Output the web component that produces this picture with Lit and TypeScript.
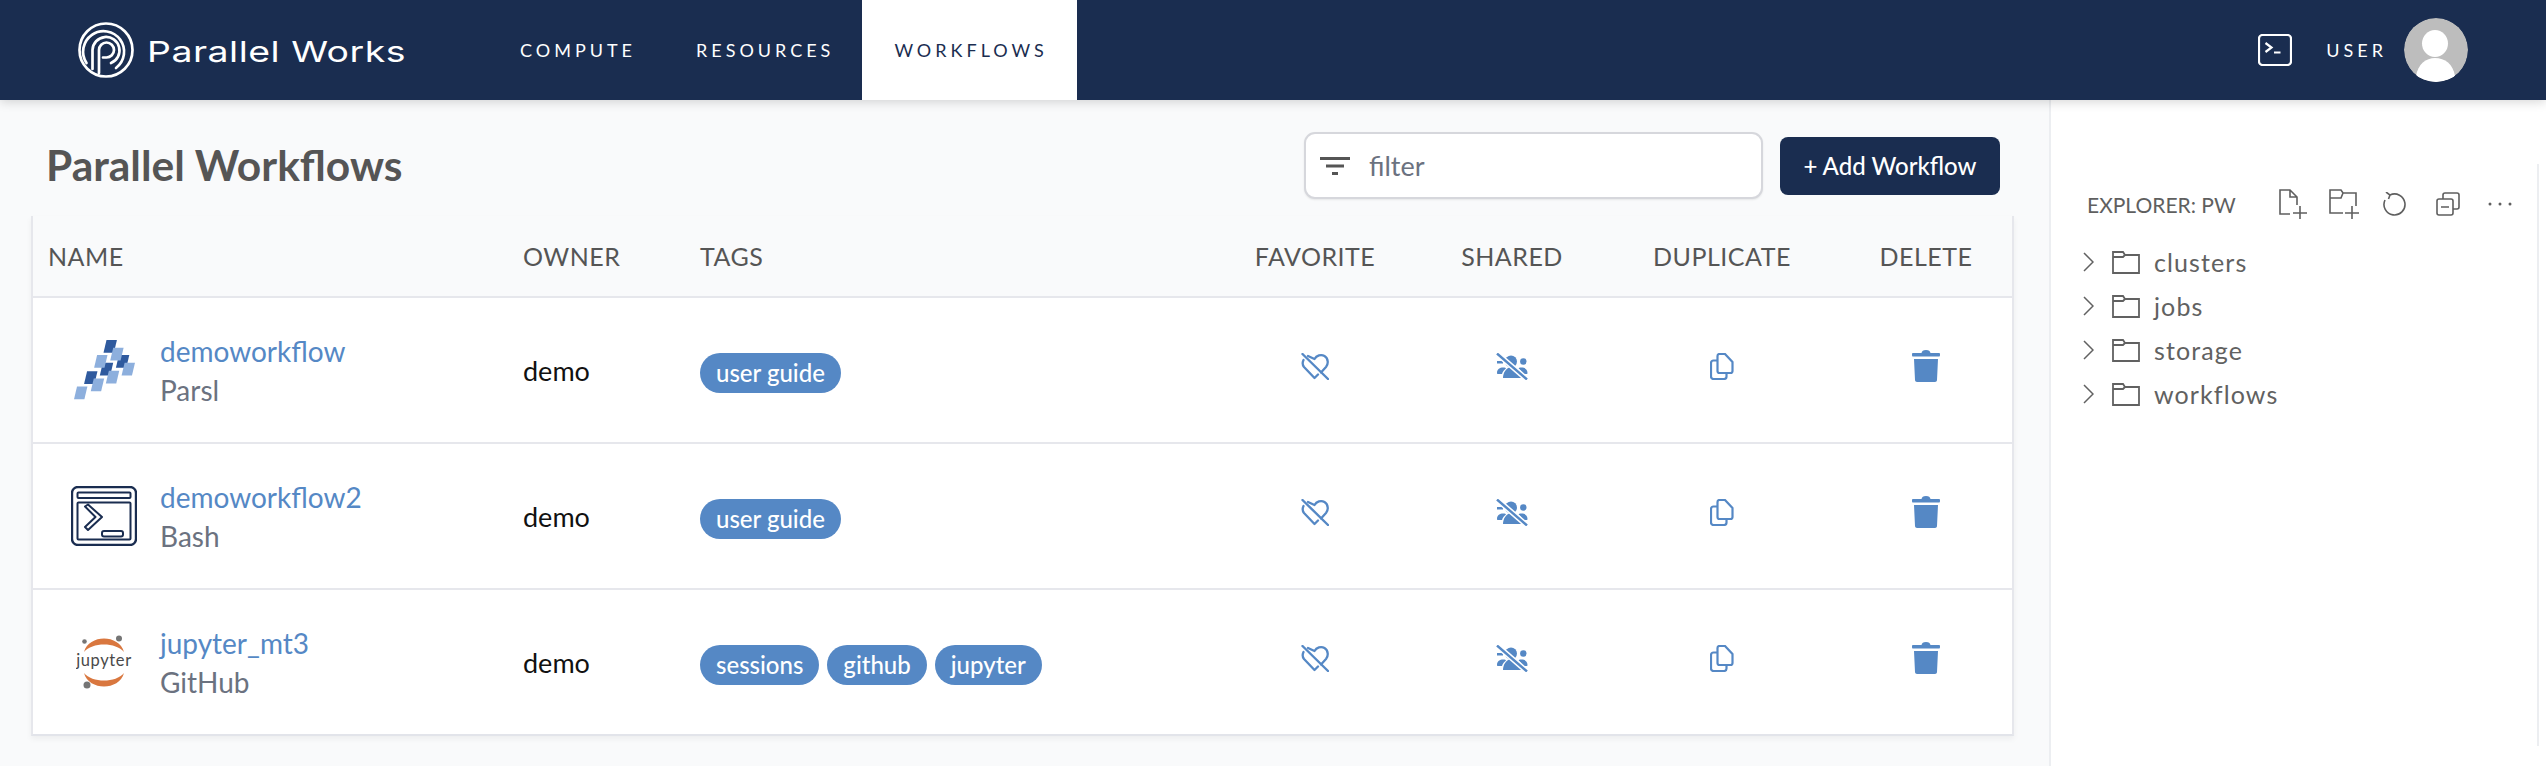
import { LitElement, html, css, svg } from 'lit';
import { customElement } from 'lit/decorators.js';

const parslDark = [[218, 120], [255, 165], [207, 188], [160, 213]];
const parslLight = [[238, 143], [190, 165], [272, 188], [225, 212], [180, 235], [130, 259]];

const tile = (x: number, y: number, fill: string) =>
  svg`<polygon fill=${fill} points="${x + 9},${y} ${x + 40},${y} ${x + 31},${y + 38} ${x},${y + 38}"></polygon>`;

const parslIcon = html`
  <svg width="61" height="60" viewBox="130 120 182 179">
    ${parslDark.map(([x, y]) => tile(x, y, '#2f5a9e'))}
    ${parslLight.map(([x, y]) => tile(x, y, '#8dafdd'))}
  </svg>`;

const bashIcon = html`
  <svg width="66" height="60" viewBox="0 0 66 60" fill="none" stroke="#1a2d50" stroke-width="2" stroke-linejoin="round">
    <rect x="1" y="1" width="64" height="58" rx="6" stroke-width="2.4"></rect>
    <rect x="6.5" y="6.5" width="53" height="5.5" rx="1"></rect>
    <rect x="6.5" y="16.5" width="53" height="37" rx="1"></rect>
    <path d="M14 20.5 L17 18.5 L31 31 L17 44 L14 41 L24.5 31 Z"></path>
    <rect x="31" y="45" width="21" height="5.5" rx="2"></rect>
  </svg>`;

const jupyterIcon = html`
  <svg width="56" height="56" viewBox="0 0 56 56">
    <path fill="#d9773f" d="M8 18 C13 0 43 0 48 18 C40 8 16 8 8 18 Z"></path>
    <path fill="#d9773f" d="M8 39 C16 49 40 49 48 39 C43 57 13 57 8 39 Z"></path>
    <circle cx="8.500" cy="7.500" r="2.300" fill="#757575"></circle>
    <circle cx="43" cy="4.500" r="3" fill="#757575"></circle>
    <circle cx="11" cy="51" r="3.500" fill="#757575"></circle>
    <text x="28" y="32" text-anchor="middle" font-family="Lato, sans-serif" font-size="16.500" letter-spacing="0.6" fill="#4a4a4a">jupyter</text>
  </svg>`;

const heartOff = html`
  <svg class="act" width="28" height="27" viewBox="0 0 28 27" fill="none" stroke="#5588c5" stroke-width="2.300" stroke-linejoin="round" stroke-linecap="round">
    <path d="M2.500 7 C1 10 1.500 12 3 14 L13.500 25 L17 21.500"></path>
    <path d="M7 3 L13.500 6 C15.500 2.500 20 1 23.500 3 C27.500 5.500 27.500 11 25 14 L20 19.500"></path>
    <path d="M1.500 1 L27 26" stroke-width="2.400"></path>
  </svg>`;

const sharedOff = html`
  <svg class="act" width="32" height="27" viewBox="0 0 32 27" fill="#5588c5">
    <circle cx="15" cy="8.500" r="6"></circle>
    <circle cx="27.300" cy="8.500" r="3.200"></circle>
    <path d="M7 25 C7 20 10 14 16 14 C21 14 25 19 25.500 25 Z"></path>
    <path d="M1 20 C1 16 4 14.500 7 14.500 C9 14.500 10 15 10 15.500 C8 17 6.500 19 6 21 L2 21 C1.300 21 1 20.700 1 20 Z"></path>
    <path d="M31.500 20 C31.500 16 28.500 14.500 25.500 14.500 C23.500 14.500 22.500 15 22.500 15.500 C24.500 17 26 19 26.500 21 L30.500 21 C31.200 21 31.500 20.700 31.500 20 Z"></path>
    <path d="M1 8 L7 8 L7 10.500 L1 10.500 Z"></path>
    <path d="M1 0.500 L31 26.500" fill="none" stroke="#fff" stroke-width="5.500"></path>
    <path d="M1 0.500 L31 26.500" fill="none" stroke="#5588c5" stroke-width="2.400"></path>
  </svg>`;

const copyIcon = html`
  <svg class="act" width="24" height="27" viewBox="0 0 24 27" fill="none" stroke="#5588c5" stroke-width="2.200" stroke-linejoin="round">
    <path d="M7.500 3 C7.500 1.800 8.500 1 9.500 1 L15 1 L22.500 9 L22.500 18 C22.500 19 21.500 20 20.500 20 L9.500 20 C8.500 20 7.500 19 7.500 18 Z"></path>
    <path d="M7 7.500 L3.500 7.500 C2 7.500 1 8.500 1 10 L1 23.500 C1 25 2 26 3.500 26 L14 26 C15.500 26 16.500 25 16.500 23.500 L16.500 20.500"></path>
  </svg>`;

const trashIcon = html`
  <svg class="act" width="28" height="32" viewBox="0 0 28 32" fill="#5588c5">
    <path d="M1 3 L9.500 3 C10 1 11 0 14 0 C17 0 18 1 18.500 3 L27 3 C27.800 3 28 3.500 28 4.500 C28 6 27.800 6.500 27 6.500 L1 6.500 C0.200 6.500 0 6 0 4.500 C0 3.500 0.200 3 1 3 Z"></path>
    <path d="M2 9 L26 9 L25 30 C25 31.300 24 32 23 32 L5 32 C4 32 3 31.300 3 30 Z"></path>
  </svg>`;

const rows = [
  { name: 'demoworkflow', kind: 'Parsl', owner: 'demo', tags: ['user guide'], icon: parslIcon },
  { name: 'demoworkflow2', kind: 'Bash', owner: 'demo', tags: ['user guide'], icon: bashIcon },
  { name: 'jupyter_mt3', kind: 'GitHub', owner: 'demo', tags: ['sessions', 'github', 'jupyter'], icon: jupyterIcon },
];

const folders = ['clusters', 'jobs', 'storage', 'workflows'];

@customElement('app-root')
export class AppRoot extends LitElement {
  static styles = css`
    :host {
      display: block;
      height: 766px;
      overflow: hidden;
      background: #f9fafb;
      font-family: Lato, sans-serif;
    }

    .topbar {
      position: relative;
      z-index: 2;
      height: 100px;
      display: flex;
      align-items: stretch;
      background: #1a2d50;
      box-shadow: 0 2px 10px rgba(0, 0, 0, 0.16);
      color: #fff;
    }

    .brand {
      width: 488px;
      padding-left: 78px;
      box-sizing: border-box;
      display: flex;
      align-items: center;
      gap: 13px;
    }

    .brand span {
      font-family: Inter, sans-serif;
      font-weight: 400;
      font-size: 29px;
      letter-spacing: 0.4px;
      white-space: nowrap;
      position: relative;
      top: 1px;
      transform: scaleX(1.29);
      transform-origin: left center;
    }

    .nav {
      display: flex;
    }

    .nav a {
      padding: 0 28px 0 32px;
      display: flex;
      align-items: center;
      font-size: 18px;
      font-weight: 400;
      letter-spacing: 4px;
    }

    .nav a.on {
      padding-right: 29px;
      background: #fff;
      color: #1a2d50;
    }

    .user {
      margin-left: auto;
      padding-right: 78px;
      display: flex;
      align-items: center;
    }

    .user .name {
      margin: 0 17px 0 34px;
      font-size: 18px;
      letter-spacing: 4px;
    }

    .avatar {
      width: 64px;
      height: 64px;
      border-radius: 50%;
      display: block;
    }

    .layout {
      display: grid;
      grid-template-columns: 2049px 497px;
      height: 666px;
    }

    .page {
      padding: 32px 35px 0 31px;
    }

    .toolbar {
      display: flex;
      align-items: center;
      height: 67px;
      padding: 0 14px 0 15px;
    }

    h1 {
      margin: 0 auto 0 0;
      font-size: 42.500px;
      line-height: 1;
      font-weight: 700;
      color: #555;
    }

    .filter {
      width: 459px;
      height: 67px;
      box-sizing: border-box;
      display: flex;
      align-items: center;
      gap: 19px;
      padding-left: 14px;
      background: #fff;
      border: 2px solid #d6d7dc;
      border-radius: 11px;
      box-shadow: 0 1px 2px rgba(0, 0, 0, 0.08);
      font-size: 27px;
      color: #6b7280;
    }

    .add {
      margin-left: 17px;
      width: 220px;
      height: 58px;
      border-radius: 8px;
      background: #1a2d50;
      color: #fff;
      display: flex;
      align-items: center;
      justify-content: center;
      font-size: 24px;
      font-weight: 500;
    }

    .table {
      margin-top: 17px;
      background: #fff;
      border-left: 2px solid #e6e7ec;
      border-right: 2px solid #e6e7ec;
      border-bottom: 2px solid #e2e4ea;
      box-shadow: 0 3px 6px rgba(0, 0, 0, 0.05);
    }

    .row {
      display: grid;
      grid-template-columns: 474px 177px 526px 210px 184px 236px 1fr;
      align-items: center;
      height: 144px;
      border-top: 2px solid #e6e7ec;
    }

    .row.head {
      height: 80px;
      border-top: none;
      background: #f9fafb;
      font-size: 25px;
      letter-spacing: 0.5px;
      color: #555;
    }

    .row.head > div:first-child {
      padding-left: 15px;
    }

    .row.head > div:nth-child(n + 2):nth-child(-n + 3) {
      padding-left: 16px;
    }

    .row.head > div:nth-child(n + 4),
    .action {
      display: flex;
      justify-content: center;
    }

    .action {
      position: relative;
      top: -4px;
    }

    .wf {
      display: flex;
      align-items: center;
    }

    .wf-icon {
      width: 66px;
      margin: 0 23px 0 38px;
      display: flex;
      justify-content: center;
    }

    .wf-text {
      line-height: 39px;
      font-size: 28px;
      position: relative;
      top: 1px;
    }

    .wf-text a {
      display: block;
      color: #5588c5;
    }

    .wf-text span {
      color: #6b7280;
    }

    .owner {
      padding-left: 16px;
      font-size: 27px;
      color: #111;
    }

    .tags {
      padding-left: 16px;
      display: flex;
      gap: 8px;
      position: relative;
      top: 3px;
    }

    .tag {
      height: 40px;
      line-height: 39px;
      padding: 0 16px;
      border-radius: 20px;
      background: #5588c5;
      color: #fff;
      font-size: 24px;
      font-weight: 500;
    }

    .side {
      background: #fff;
      border-left: 2px solid #eceef1;
      box-sizing: border-box;
      padding: 84px 7px 0 0;
    }

    .side-inner {
      height: 100%;
      border-right: 2px solid #eceef1;
      margin-top: -20px;
      padding-top: 20px;
      box-sizing: border-box;
    }

    .explorer {
      height: 40px;
      display: flex;
      align-items: center;
      padding-left: 36px;
      font-size: 21px;
      color: #5f5f5f;
    }

    .explorer .title {
      width: 192px;
    }

    .explorer svg {
      margin-right: 20px;
      flex: none;
    }

    .explorer .new-file {
      margin-right: 22px;
    }

    .explorer .refresh {
      margin-left: 3px;
    }

    .explorer .collapse {
      margin-left: 10px;
    }

    .explorer .more {
      margin-left: 8px;
    }

    .tree {
      margin-top: 16px;
    }

    .tree-row {
      height: 44px;
      display: flex;
      align-items: center;
      padding-left: 32px;
      font-size: 25px;
      letter-spacing: 1.1px;
      color: #616161;
    }

    .tree-row svg {
      flex: none;
    }

    .tree-row .folder {
      margin: 0 14px 0 18px;
    }
  `;

  renderRow(r: (typeof rows)[number]) {
    return html`
      <div class="row">
        <div class="wf">
          <div class="wf-icon">${r.icon}</div>
          <div class="wf-text"><a>${r.name}</a><span>${r.kind}</span></div>
        </div>
        <div class="owner">${r.owner}</div>
        <div class="tags">${r.tags.map((t) => html`<span class="tag">${t}</span>`)}</div>
        <div class="action">${heartOff}</div>
        <div class="action">${sharedOff}</div>
        <div class="action">${copyIcon}</div>
        <div class="action">${trashIcon}</div>
      </div>
    `;
  }

  render() {
    return html`
      <header class="topbar">
        <div class="brand">
          <svg width="56" height="56" viewBox="0 0 56 56" fill="none" stroke="#fff" stroke-width="2.700" stroke-linecap="round">
            <circle cx="28" cy="28" r="26.500"></circle>
            <path d="M8.500 41 A20.500 20.500 0 1 1 38 46"></path>
            <path d="M14.500 47 V28 A13.500 13.500 0 1 1 33 41"></path>
            <path d="M21 51 V28 A7.500 7.500 0 1 1 28.500 35.500 H25"></path>
          </svg>
          <span>Parallel Works</span>
        </div>
        <nav class="nav">
          <a>COMPUTE</a>
          <a>RESOURCES</a>
          <a class="on">WORKFLOWS</a>
        </nav>
        <div class="user">
          <svg width="34" height="32" viewBox="0 0 34 32" fill="none" stroke="#fff" stroke-width="2.200">
            <rect x="1" y="1" width="32" height="30" rx="3.500"></rect>
            <path d="M7.500 9 L13.500 13.500 L7.500 18 M16 18.500 H22.500"></path>
          </svg>
          <span class="name">USER</span>
          <svg class="avatar" viewBox="0 0 64 64">
            <circle cx="32" cy="32" r="32" fill="#bdbdbd"></circle>
            <ellipse cx="31" cy="25.500" rx="13" ry="13.500" fill="#fff"></ellipse>
            <path d="M12 58 C14 46 22 40 31 40 C41 40 49 46 51 58 C46 62 38 64 31 64 C24 64 17 62 12 58 Z" fill="#fff"></path>
          </svg>
        </div>
      </header>
      <div class="layout">
        <main class="page">
          <div class="toolbar">
            <h1>Parallel Workflows</h1>
            <div class="filter">
              <svg width="30" height="20" viewBox="0 0 30 20" fill="#555">
                <rect x="0" y="1" width="30" height="3"></rect>
                <rect x="6" y="8.500" width="18" height="3"></rect>
                <rect x="12" y="16" width="6" height="3"></rect>
              </svg>
              <span>filter</span>
            </div>
            <div class="add">+ Add Workflow</div>
          </div>
          <div class="table">
            <div class="row head">
              <div>NAME</div>
              <div>OWNER</div>
              <div>TAGS</div>
              <div>FAVORITE</div>
              <div>SHARED</div>
              <div>DUPLICATE</div>
              <div>DELETE</div>
            </div>
            ${rows.map((r) => this.renderRow(r))}
          </div>
        </main>
        <aside class="side">
          <div class="side-inner">
            <div class="explorer">
              <span class="title">EXPLORER: PW</span>
              <svg class="new-file" width="28" height="30" viewBox="0 0 28 30" fill="none" stroke="#5f5f5f" stroke-width="1.600">
                <path d="M11 25 H1 V1 H11 L18 8 V16 M11 1 V8 H18 M14 24 H28 M21 17 V30"></path>
              </svg>
              <svg width="30" height="30" viewBox="0 0 30 30" fill="none" stroke="#5f5f5f" stroke-width="1.600">
                <path d="M14 24 H1 V1 H12 L14 4 H27 V17 M1 9 H12 L14 4 M16 24 H30 M23 17 V30"></path>
              </svg>
              <svg class="refresh" width="24" height="24" viewBox="0 0 24 24" fill="none" stroke="#5f5f5f" stroke-width="1.600">
                <path d="M8 3 A10.500 10.500 0 1 1 3 8 M4 0 L8 3 L6.500 7"></path>
              </svg>
              <svg class="collapse" width="24" height="24" viewBox="0 0 24 24" fill="none" stroke="#5f5f5f" stroke-width="1.600">
                <rect x="1" y="7" width="16" height="16" rx="2"></rect>
                <path d="M7 7 V3 Q7 1 9 1 H21 Q23 1 23 3 V15 Q23 17 21 17 H17 M5 15 H13"></path>
              </svg>
              <svg class="more" width="24" height="4" viewBox="0 0 24 4" fill="#5f5f5f">
                <circle cx="2" cy="2" r="1.500"></circle>
                <circle cx="12" cy="2" r="1.500"></circle>
                <circle cx="22" cy="2" r="1.500"></circle>
              </svg>
            </div>
            <div class="tree">
              ${folders.map(
                (f) => html`
                  <div class="tree-row">
                    <svg width="11" height="20" viewBox="0 0 11 20" fill="none" stroke="#616161" stroke-width="1.500"><path d="M1 1 L10 10 L1 19"></path></svg>
                    <svg class="folder" width="28" height="23" viewBox="0 0 28 23" fill="none" stroke="#616161" stroke-width="1.800">
                      <path d="M1 22 V1 H11 L13 4 H27 V22 Z M1 6 H11 L13 4"></path>
                    </svg>
                    <span>${f}</span>
                  </div>
                `
              )}
            </div>
          </div>
        </aside>
      </div>
    `;
  }
}
